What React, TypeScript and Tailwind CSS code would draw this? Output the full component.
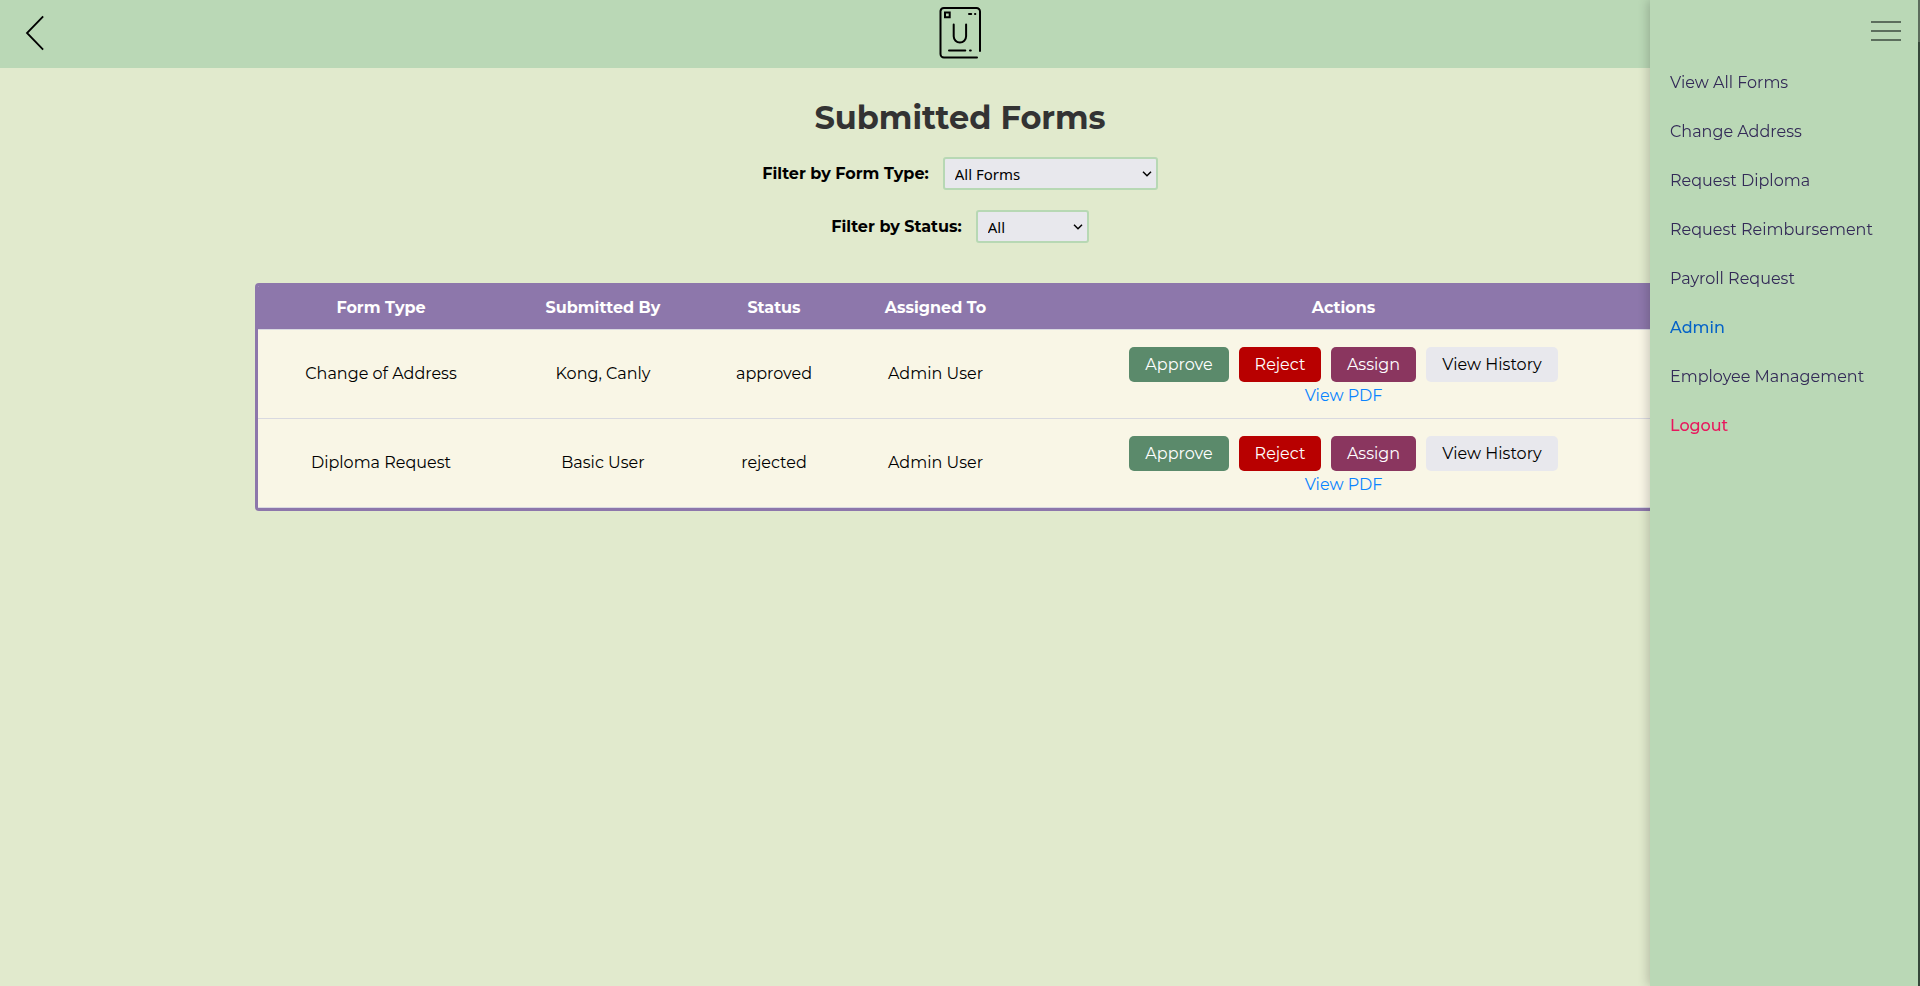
import { useState } from "react";

type FormRow = { type: string; by: string; status: string; assignee: string };

const rows: FormRow[] = [
  { type: "Change of Address", by: "Kong, Canly", status: "approved", assignee: "Admin User" },
  { type: "Diploma Request", by: "Basic User", status: "rejected", assignee: "Admin User" },
];

const links = [
  { label: "View All Forms", style: "text-[#332a57]" },
  { label: "Change Address", style: "text-[#332a57]" },
  { label: "Request Diploma", style: "text-[#332a57]" },
  { label: "Request Reimbursement", style: "text-[#332a57]" },
  { label: "Payroll Request", style: "text-[#332a57]" },
  { label: "Admin", style: "font-medium text-[#0563c8]" },
  { label: "Employee Management", style: "text-[#332a57]" },
  { label: "Logout", style: "font-medium text-[#e8175d]" },
];

const actions = [
  { label: "Approve", style: "w-[100px] bg-[#5b8a6b] text-white" },
  { label: "Reject", style: "w-[82px] bg-[#b80000] text-white" },
  { label: "Assign", style: "w-[85px] bg-[#8a365f] text-white" },
  { label: "View History", style: "w-[132px] bg-[#e8e8ed] text-black" },
];

function Logo() {
  return (
    <svg width="42" height="52" viewBox="0 0 42 52" fill="none" stroke="black" strokeWidth="2" strokeLinecap="round" aria-hidden="true">
      <path d="M38 50.500H5a3.500 3.500 0 0 1-3.500-3.500V4A3.500 3.500 0 0 1 5 1h32.500a3.500 3.500 0 0 1 3.500 3.500V44" />
      <path d="M6 5.600h4.700v4.700H6z" strokeLinejoin="miter" />
      <path d="M30 7h2.200M36 7h.3M10 43.500h16.300M31 43.500h.8" />
      <path d="M14.700 17.500v11.800a6.200 6.200 0 0 0 12.400 0V17.500" />
    </svg>
  );
}

type FilterProps = {
  id: string;
  label: string;
  value: string;
  options: string[];
  width: string;
  onChange: (value: string) => void;
};

function Filter({ id, label, value, options, width, onChange }: FilterProps) {
  return (
    <div className="flex items-center gap-3.5">
      <label htmlFor={id} className="font-bold">{label}</label>
      <div className={`relative ${width}`}>
        <select
          id={id}
          value={value}
          onChange={(e) => onChange(e.target.value)}
          className="h-[33px] w-full appearance-none rounded-[3px] border-2 border-[#b7d8b4] bg-[#e8e8ed] pl-2.5 font-['Noto_Sans',sans-serif] text-[15px]"
        >
          {options.map((o) => (
            <option key={o}>{o}</option>
          ))}
        </select>
        <svg width="10" height="6" viewBox="0 0 10 6" fill="none" stroke="black" strokeWidth="1.5" className="pointer-events-none absolute top-3.5 right-1.5" aria-hidden="true">
          <path d="M1 .8l4 4 4-4" />
        </svg>
      </div>
    </div>
  );
}

export default function App() {
  const [formType, setFormType] = useState("All Forms");
  const [status, setStatus] = useState("All");
  return (
    <div className="min-h-screen bg-[#e1eacd] font-['Montserrat','Inter',sans-serif] text-base leading-5 text-black">
      <header className="grid h-17 grid-cols-3 items-center bg-[#bad8b6]">
        <button aria-label="Back" className="ml-[19px] flex size-8 items-center justify-center">
          <svg width="32" height="40" viewBox="0 0 32 40" fill="none" stroke="black" strokeWidth="1.8" className="shrink-0" aria-hidden="true">
            <path d="M23.500 3 8 19l15.500 16" strokeLinecap="square" />
          </svg>
        </button>
        <a href="#home" aria-label="Home" className="mb-0.5 justify-self-center">
          <Logo />
        </a>
      </header>

      <main className="flex flex-col items-center px-6 pt-7">
        <h1 className="text-[32px] leading-11 font-bold text-[#333333]">Submitted Forms</h1>
        <div className="mt-[17px] flex flex-col items-center gap-5">
          <Filter
            id="form-type"
            label="Filter by Form Type:"
            value={formType}
            options={["All Forms", "Change of Address", "Diploma Request"]}
            width="w-[215px]"
            onChange={setFormType}
          />
          <Filter
            id="status"
            label="Filter by Status:"
            value={status}
            options={["All", "approved", "rejected"]}
            width="w-[113px]"
            onChange={setStatus}
          />
        </div>

        <div className="mt-10 w-full max-w-[1411px] overflow-hidden rounded border-3 border-[#8d77ab] bg-[#f9f6e6]">
          <table className="w-full table-fixed border-separate border-spacing-0 text-center">
            <colgroup>
              <col className="w-[247px]" />
              <col className="w-[197px]" />
              <col className="w-[145px]" />
              <col className="w-[178px]" />
              <col />
            </colgroup>
            <thead>
              <tr className="h-11 bg-[#8d77ab] text-white *:border-b *:border-[#d9d9e0]">
                <th>Form Type</th>
                <th>Submitted By</th>
                <th>Status</th>
                <th>Assigned To</th>
                <th>Actions</th>
              </tr>
            </thead>
            <tbody>
              {rows.map((row) => (
                <tr key={row.type} className="h-[89px] *:border-b *:border-[#d9d9e0]">
                  <td>{row.type}</td>
                  <td>{row.by}</td>
                  <td>{row.status}</td>
                  <td>{row.assignee}</td>
                  <td className="pt-1">
                    <div className="flex justify-center gap-2.5">
                      {actions.map((a) => (
                        <button key={a.label} className={`h-[35px] rounded-[5px] pt-px whitespace-nowrap ${a.style}`}>
                          {a.label}
                        </button>
                      ))}
                    </div>
                    <a href="#pdf" className="mt-1 inline-block text-[#0a84ff]">View PDF</a>
                  </td>
                </tr>
              ))}
            </tbody>
          </table>
        </div>
      </main>

      <aside className="fixed inset-y-0 right-0 flex w-[270px] bg-[#bad8b6] shadow-[-2px_0_10px_rgba(0,0,0,0.2)]">
        <div className="flex flex-1 flex-col">
          <button aria-label="Toggle menu" className="mt-[21px] mr-[17px] flex w-[30px] flex-col gap-[7px] self-end">
            <span className="h-0.5 w-full bg-[#5c6e5d]" />
            <span className="h-0.5 w-full bg-[#5c6e5d]" />
            <span className="h-0.5 w-full bg-[#5c6e5d]" />
          </button>
          <nav className="mt-8 flex flex-col gap-[29px] pl-5">
            {links.map((l) => (
              <a key={l.label} href="#nav" className={`whitespace-nowrap ${l.style}`}>{l.label}</a>
            ))}
          </nav>
        </div>
        <div className="w-0.5 bg-[#36473a]">
          <div className="h-[42px] bg-[#5d6d5d]" />
        </div>
      </aside>
    </div>
  );
}
